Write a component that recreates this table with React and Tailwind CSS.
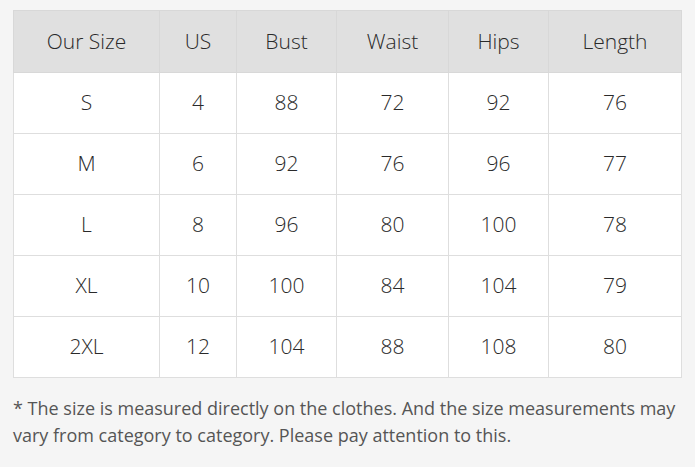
import React from "react";

const cols = ["Our Size", "US", "Bust", "Waist", "Hips", "Length"];
const widths = ["w-[146px]", "w-[77px]", "w-[100px]", "w-[112px]", "w-[100px]", "w-[133px]"];
const rows = [
  ["S", "4", "88", "72", "92", "76"],
  ["M", "6", "92", "76", "96", "77"],
  ["L", "8", "96", "80", "100", "78"],
  ["XL", "10", "100", "84", "104", "79"],
  ["2XL", "12", "104", "88", "108", "80"],
];

export default function App() {
  return (
    <div className="w-[695px] h-[467px] bg-[#f5f5f5] pt-[10px] px-[13px] font-['Open_Sans',sans-serif]">
      <table className="border-collapse w-[668px] table-fixed">
        <thead>
          <tr className="bg-[#e0e0e0] h-[62px]">
            {cols.map((c, i) => (
              <th key={c} className={`${widths[i]} border border-[#d8d8d8] font-light text-[21px] text-[#2a2a2a] text-center`}>
                {c}
              </th>
            ))}
          </tr>
        </thead>
        <tbody>
          {rows.map((r) => (
            <tr key={r[0]} className="bg-white h-[61px]">
              {r.map((v, i) => (
                <td key={i} className="border border-[#dedede] font-light text-[21px] text-[#2a2a2a] text-center">
                  {v}
                </td>
              ))}
            </tr>
          ))}
        </tbody>
      </table>
      <p className="mt-[17px] text-[18px] leading-[27px] text-[#555]">
        * The size is measured directly on the clothes. And the size measurements may vary from category to category. Please pay attention to this.
      </p>
    </div>
  );
}
